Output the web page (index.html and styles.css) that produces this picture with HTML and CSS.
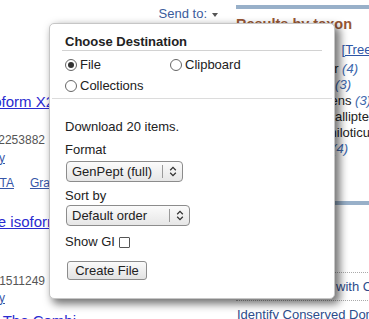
FILE: index.html
```html
<!DOCTYPE html>
<html>
<head>
<meta charset="utf-8">
<link rel="stylesheet" href="styles.css">
</head>
<body>
<div class="page">
  <div class="main">
    <div class="sendto"><a class="sendto-link">Send to:</a><span class="tri"></span></div>
    <div class="rows">
      <div class="row title r1"><a>PREDICTED: protein isoform X2</a></div>
      <div class="row meta r2">Accession: XP_0000000.1 GI: 1022253882</div>
      <div class="row small r3"><a>Identical Proteins Summary</a></div>
      <div class="row small r4"><a>GenPept</a> <a>FASTA</a><a class="gap">Graphics</a></div>
      <div class="row title r5"><a>PREDICTED: serine protease isoform X1</a></div>
      <div class="row meta r6">Accession: XP_0000000.1 GI: 1021511249</div>
      <div class="row small r7"><a>Identical Proteins Summary</a></div>
      <div class="row title r8"><a>The Combi</a></div>
    </div>
  </div>
  <div class="side">
    <div class="bar"></div>
    <div class="tax-title">Results by taxon</div>
    <div class="taxlist">
      <div class="t1">Top Organisms <a class="tree">[Tree]</a></div>
      <div class="t2">Salmo salar <em>(4)</em></div>
      <div class="t3">Danio rerio <em>(3)</em></div>
      <div class="t4">Homo sapiens <em>(3)</em></div>
      <div class="t5">Astatotilapia calliptera <em>(3)</em></div>
      <div class="t6">Oreochromis niloticus <em>(4)</em></div>
      <div class="t7">All other taxa <em>(4)</em></div>
    </div>
    <div class="bar bar2"></div>
    <div class="tools">
      <div class="tool"><a>Run BLAST</a></div>
      <div class="tool"><a>Align sequences with COBALT</a></div>
      <div class="tool"><a>Identify Conserved Domains</a></div>
    </div>
  </div>
</div>

<div class="popup">
  <div class="dest-head">Choose Destination</div>
  <div class="radios">
    <label class="radio"><span class="dot checked"></span>File</label>
    <label class="radio"><span class="dot"></span>Clipboard</label>
    <label class="radio"><span class="dot"></span>Collections</label>
  </div>
  <div class="sep"></div>
  <div class="pbody">
    <div class="line">Download 20 items.</div>
    <div class="line lbl-format">Format</div>
    <div class="select sel1">
      <span class="sel-text">GenPept (full)</span>
      <span class="sel-div"></span>
      <span class="chev"><svg width="8" height="11" viewBox="0 0 8 11"><path d="M1.2 4.2 L4 1.4 L6.8 4.2 M1.2 6.8 L4 9.6 L6.8 6.8" fill="none" stroke="#333" stroke-width="1.3"/></svg></span>
    </div>
    <div class="line lbl-sort">Sort by</div>
    <div class="select sel2">
      <span class="sel-text">Default order</span>
      <span class="sel-div"></span>
      <span class="chev"><svg width="8" height="11" viewBox="0 0 8 11"><path d="M1.2 4.2 L4 1.4 L6.8 4.2 M1.2 6.8 L4 9.6 L6.8 6.8" fill="none" stroke="#333" stroke-width="1.3"/></svg></span>
    </div>
    <div class="line showgi">Show GI<span class="check"></span></div>
    <div class="btn">Create File</div>
  </div>
</div>
</body>
</html>
```
FILE: styles.css
```css
html, body {
  margin: 0;
  padding: 0;
  width: 369px;
  height: 319px;
  overflow: hidden;
  background: #fff;
}
body {
  font-family: "Liberation Sans", Arial, sans-serif;
  font-size: 13px;
  color: #222;
  position: relative;
}
a { text-decoration: none; }

.page {
  display: flex;
  align-items: flex-start;
}
.main {
  width: 236px;
  flex: none;
  overflow: hidden;
}
.sendto {
  margin-top: 6px;
  line-height: 16px;
  padding-right: 18px;
  display: flex;
  justify-content: flex-end;
  align-items: center;
}
.sendto-link { color: #3b5c9c; }
.tri {
  width: 0;
  height: 0;
  border-left: 3.5px solid transparent;
  border-right: 3.5px solid transparent;
  border-top: 4px solid #555;
  margin-left: 5px;
  margin-top: 1px;
}

.rows {
  margin-left: -300px;
  width: 400px;
  text-align: right;
  white-space: nowrap;
}
.row a { text-decoration: underline; }
.title { font-size: 15px; line-height: 18px; }
.title a { color: #2a2ad0; }
.meta { font-size: 12px; line-height: 16px; color: #555; }
.small { font-size: 12px; line-height: 16px; }
.small a { color: #3656a8; }
.gap { margin-left: 16px; }

.r1 { margin-top: 71px; padding-right: 46px; }
.r2 { margin-top: 21px; padding-right: 55px; }
.r3 { margin-top: 2px; padding-right: 95px; }
.r4 { margin-top: 9px; padding-right: 22px; }
.r5 { margin-top: 22px; padding-right: 18px; }
.r6 { margin-top: 42px; padding-right: 55px; }
.r7 { margin-top: 1px; padding-right: 95px; }
.r8 { margin-top: 6px; padding-right: 24px; }

.side {
  width: 200px;
  flex: none;
}
.bar {
  height: 4px;
  margin-top: 5px;
  background: #98b0c9;
}
.tax-title {
  margin-top: 6px;
  font-size: 14.5px;
  font-weight: bold;
  line-height: 18px;
  color: #985735;
  white-space: nowrap;
}
.taxlist {
  margin-top: 9px;
  text-align: right;
  line-height: 16px;
  white-space: nowrap;
  color: #222;
}
.taxlist em { color: #3d68ad; }
.tree { color: #2d55a5; text-decoration: underline; margin-left: 8px; }
.t1 { padding-right: 61px; margin-bottom: 3px; }
.t2 { padding-right: 78px; }
.t3 { padding-right: 85px; }
.t4 { padding-right: 65px; }
.t5 { padding-right: 36px; }
.t6 { padding-right: 40px; }
.t7 { padding-right: 88px; }
.bar2 { margin-top: 44px; }

.tools { margin-top: 40px; }
.tool {
  padding: 6px 0 5px 1px;
  line-height: 16px;
  border-bottom: 1px dotted #aaa;
  white-space: nowrap;
}
.tool a { color: #2d4c8b; }

/* popup */
.popup {
  position: absolute;
  left: 49px;
  top: 23px;
  width: 284px;
  height: 274px;
  border: 1px solid #c6c6c6;
  border-radius: 5px;
  background: #fff;
  box-shadow: 4px 4px 9px 1px rgba(0, 0, 0, 0.55);
  color: #222;
}
.dest-head {
  margin: 0 12px;
  padding: 10px 0 0 3px;
  font-weight: bold;
  line-height: 16px;
  border-bottom: 1px solid #d2d2d2;
}
.radios {
  display: grid;
  grid-template-columns: 105px auto;
  row-gap: 5px;
  padding-left: 15px;
  margin-top: 6px;
}
.radio {
  display: flex;
  align-items: center;
  line-height: 16px;
}
.dot {
  width: 10px;
  height: 10px;
  border: 1px solid #666;
  border-radius: 50%;
  margin-right: 3px;
  position: relative;
  background: #fff;
}
.dot.checked::after {
  content: "";
  position: absolute;
  left: 2px;
  top: 2px;
  width: 6px;
  height: 6px;
  border-radius: 50%;
  background: #333;
}
.sep {
  margin: 4px 2px 0;
  border-top: 1px solid #dcdcdc;
}
.pbody {
  padding: 20px 15px 0;
}
.line { line-height: 16px; }
.lbl-format { margin-top: 7px; }
.lbl-sort { margin-top: 6px; }
.select {
  display: flex;
  align-items: center;
  height: 19px;
  margin-left: 1px;
  margin-top: 3px;
  border: 1px solid #8c8c8c;
  border-radius: 4px;
  background: linear-gradient(#fbfbfb, #e6e6e6);
  line-height: 16px;
}
.sel1 { width: 115px; }
.sel2 { width: 122px; margin-top: 1px; }
.sel-text { flex: 1; padding-left: 5px; white-space: nowrap; }
.sel-div { width: 1px; height: 13px; background: #9a9a9a; }
.chev {
  width: 19px;
  display: flex;
  justify-content: center;
  align-items: center;
}
.showgi {
  margin-top: 8px;
  display: flex;
  align-items: center;
}
.check {
  width: 9px;
  height: 9px;
  border: 1px solid #555;
  border-radius: 1px;
  margin-left: 4px;
  background: #fff;
}
.btn {
  display: inline-block;
  margin-top: 11px;
  margin-left: 2px;
  width: 78px;
  height: 17px;
  line-height: 17px;
  text-align: center;
  border: 1px solid #8c8c8c;
  border-radius: 3px;
  background: linear-gradient(#fafafa, #e2e2e2);
}
```
